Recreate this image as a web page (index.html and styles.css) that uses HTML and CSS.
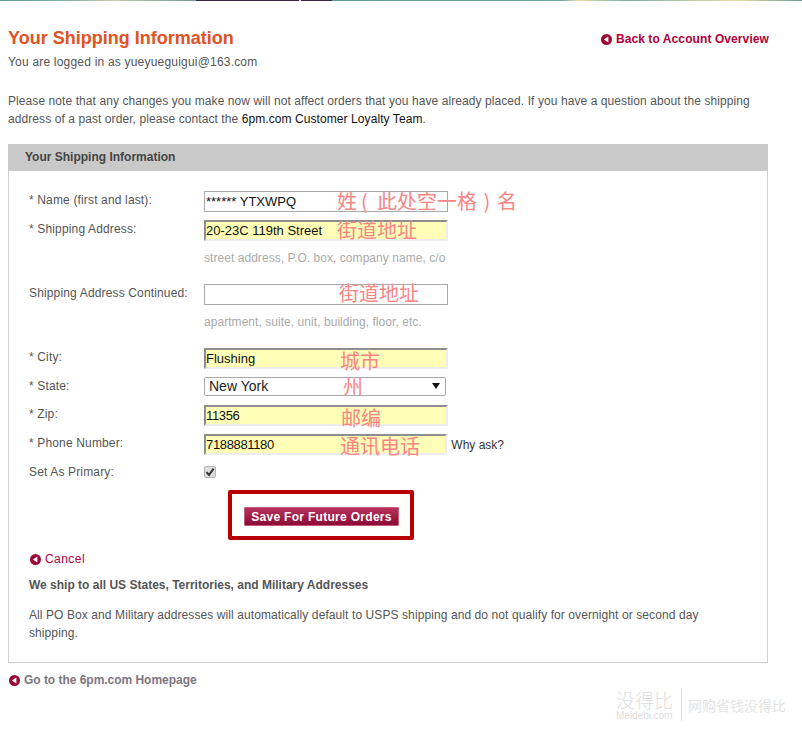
FILE: index.html
```html
<!DOCTYPE html>
<html lang="en">
<head>
<meta charset="utf-8">
<title>Your Shipping Information</title>
<link rel="stylesheet" href="styles.css">
</head>
<body>
<svg class="sprite" width="0" height="0" aria-hidden="true"><symbol id="back" viewBox="0 0 11 11"><circle cx="5.5" cy="5.5" r="5.5" fill="#9b0a33"/><path d="M7.4 2.4v6.2L2.9 5.5z" fill="#fff"/></symbol></svg>
<div class="topstrip"></div>
<div class="page">
  <header class="head">
    <div>
      <h1 class="title">Your Shipping Information</h1>
      <p class="logged">You are logged in as yueyueguigui@163.com</p>
    </div>
    <a class="link back" href="#"><svg class="ico"><use href="#back"/></svg>Back to Account Overview</a>
  </header>
  <p class="note">Please note that any changes you make now will not affect orders that you have already placed. If you have a question about the shipping address of a past order, please contact the <a class="dark" href="#">6pm.com Customer Loyalty Team</a>.</p>
  <section class="panel">
    <h2 class="panel-title">Your Shipping Information</h2>
    <div class="panel-body">
      <form class="form">
        <div class="row"><label class="lab">* Name (first and last):</label><div class="field"><input class="inp plain" value="****** YTXWPQ"><span class="anno a-name">姓<span class="par par-l">(</span>此处空一格<span class="par">)</span>名</span></div></div>
        <div class="row"><label class="lab">* Shipping Address:</label><div class="field"><input class="inp fill" value="20-23C 119th Street"><span class="anno a-addr">街道地址</span></div></div>
        <p class="hint">street address, P.O. box, company name, c/o</p>
        <div class="row"><label class="lab">Shipping Address Continued:</label><div class="field"><input class="inp plain"><span class="anno a-addr2">街道地址</span></div></div>
        <p class="hint">apartment, suite, unit, building, floor, etc.</p>
        <div class="row"><label class="lab">* City:</label><div class="field"><input class="inp fill" value="Flushing"><span class="anno a-city">城市</span></div></div>
        <div class="row r-state"><label class="lab">* State:</label><div class="field"><div class="select">New York<span class="arrow"></span></div><span class="anno a-state">州</span></div></div>
        <div class="row"><label class="lab">* Zip:</label><div class="field"><input class="inp fill num" value="11356"><span class="anno a-zip">邮编</span></div></div>
        <div class="row"><label class="lab">* Phone Number:</label><div class="field"><input class="inp fill num" value="7188881180"><span class="anno a-phone">通讯电话</span><a class="why" href="#">Why ask?</a></div></div>
        <div class="row r-prim"><label class="lab">Set As Primary:</label><div class="field"><span class="check"><svg width="10" height="10" viewBox="0 0 10 10"><path d="M1.5 5.2 4 8 8.6 1.6" fill="none" stroke="#333" stroke-width="2"/></svg></span></div></div>
        <div class="save-wrap"><div class="save-box"><button type="button" class="save">Save For Future Orders</button></div></div>
      </form>
      <a class="link cancel" href="#"><svg class="ico"><use href="#back"/></svg>Cancel</a>
      <h3 class="ship">We ship to all US States, Territories, and Military Addresses</h3>
      <p class="po">All PO Box and Military addresses will automatically default to USPS shipping and do not qualify for overnight or second day shipping.</p>
    </div>
  </section>
  <a class="home" href="#"><svg class="ico"><use href="#back"/></svg>Go to the 6pm.com Homepage</a>
</div>
<div class="mark"><div class="mark-l"><span class="mark-cn">没得比</span><span class="mark-en">Meidebi.com</span></div><span class="mark-s">网购省钱没得比</span></div>
</body>
</html>
```

FILE: styles.css
```css
html, body { margin: 0; padding: 0; background: #fff; }
body { font-family: "Liberation Sans", Arial, sans-serif; font-size: 12px; color: #555; height: 740px; overflow: hidden; position: relative; }
.sprite { position: absolute; }
.topstrip { height: 1px; background: linear-gradient(90deg, #5f9a94 0, #7fb0a6 8%, #c9c9b0 14%, #6f9a96 24.5%, #3a2a44 24.5%, #3a2a44 37.3%, #ddd 37.3%, #ddd 37.5%, #3a2a44 37.5%, #3a2a44 41.4%, #5f9a94 41.4%, #6ea8a0 70%, #e8d9a8 72%, #7fb0a6 78%, #e8d9a8 92%, #6f9a96 100%); }
.page { width: 760px; margin-left: 8px; }
.head { display: flex; justify-content: space-between; align-items: flex-start; padding-top: 27px; }
.title { margin: 0; font-size: 18px; line-height: 20px; font-weight: bold; color: #e2531f; }
.logged { margin: 7px 0 0; line-height: 14px; letter-spacing: .2px; }
.link { color: #b5003a; text-decoration: none; display: flex; align-items: center; }
.back { font-weight: bold; margin-top: 4px; margin-right: -1px; font-size: 12px; letter-spacing: .09px; }
.ico { width: 11px; height: 11px; margin-right: 4px; flex: none; }
.note { margin: 23px 0 0; line-height: 18px; letter-spacing: .08px; }
.dark { color: #111; text-decoration: none; }
.panel { margin-top: 16px; }
.panel-title { margin: 0; height: 27px; line-height: 27px; background: #c9c9c9; padding-left: 17px; font-size: 12px; font-weight: bold; color: #444; }
.panel-body { border: 1px solid #cfcfcf; border-top: 0; padding: 20px; height: 451px; }
.form { display: flex; flex-direction: column; }
.row { display: flex; margin-bottom: 8px; }
.r-state { margin-bottom: 9px; }
.lab { width: 175px; flex: none; padding-top: 1px; line-height: 16px; letter-spacing: .15px; }
.field { position: relative; display: flex; align-items: center; width: 300px; }
.inp { box-sizing: border-box; width: 244px; height: 21px; margin: 0; padding: 0; font: 13px "Liberation Sans", Arial, sans-serif; color: #111; outline: 0; }
.num { letter-spacing: -.35px; }
.plain { border: 1px solid #a9a9a9; background: #fff; padding-left: 1px; }
.fill { background: #ffffb8; border: 2px solid #ececec; border-top-color: #8e8e8e; border-left-color: #8e8e8e; }
.hint { margin: 1px 0 18px 175px; line-height: 16px; color: #aaa; letter-spacing: .05px; }
.select { box-sizing: border-box; width: 242px; height: 19px; border: 1px solid #a9a9a9; border-radius: 2px; font-size: 14px; line-height: 17px; padding-left: 4px; color: #222; position: relative; }
.arrow { position: absolute; right: 5px; top: 5px; border: 4px solid transparent; border-top: 6px solid #111; border-bottom: 0; }
.why { margin-left: 4px; color: #333; text-decoration: none; white-space: nowrap; }
.check { box-sizing: border-box; width: 12px; height: 12px; border: 1px solid #b5b5b5; border-radius: 2px; background: #dcdcdc; display: flex; }
.anno { position: absolute; top: -3px; font-family: "Noto Sans CJK SC", sans-serif; font-size: 20px; line-height: 26px; color: #f98585; white-space: nowrap; }
.par { display: inline-block; box-sizing: border-box; width: 20px; text-align: center; }
.par-l { padding-right: 5px; }
.a-name { left: 133px; }
.a-addr { left: 133px; }
.a-addr2 { left: 135px; top: -4px; }
.a-city { left: 136px; top: 0; }
.a-state { left: 139px; top: -3px; }
.a-zip { left: 137px; top: 0; }
.a-phone { left: 136px; top: -1px; }
.save-wrap { padding-left: 199px; margin-top: 2px; }
.save-box { box-sizing: border-box; width: 186px; height: 50px; padding-top: 2px; border: 4px solid #b80000; border-radius: 2px; display: flex; justify-content: center; align-items: center; }
.save { width: 155px; height: 19px; padding: 1px 0 0 1px; border: 1px solid #c45a78; border-radius: 1px; background: linear-gradient(#b8325c, #8c0a36); color: #fff; font: bold 12px "Liberation Sans", Arial, sans-serif; letter-spacing: .3px; }
.cancel { margin-top: 11px; padding-left: 1px; line-height: 16px; letter-spacing: .45px; }
.ship { margin: 10px 0 0; font-size: 12px; line-height: 16px; font-weight: bold; color: #555; }
.po { margin: 13px 0 0; line-height: 18px; width: 690px; letter-spacing: .09px; }
.home { display: flex; align-items: center; color: #7d7580; font-weight: bold; text-decoration: none; margin-top: 9px; padding-left: 1px; line-height: 16px; letter-spacing: -.03px; }
.mark { position: absolute; left: 616px; top: 689px; display: flex; align-items: center; color: #dedede; }
.mark-l { display: flex; flex-direction: column; padding-right: 8px; border-right: 1px solid #ddd; }
.mark-cn { font-family: "Noto Sans CJK SC", sans-serif; font-size: 19px; line-height: 22px; font-weight: 300; }
.mark-en { font-size: 10px; line-height: 10px; }
.mark-s { font-family: "Noto Sans CJK SC", sans-serif; font-size: 14px; padding-left: 6px; color: #e4e4e4; }
```
